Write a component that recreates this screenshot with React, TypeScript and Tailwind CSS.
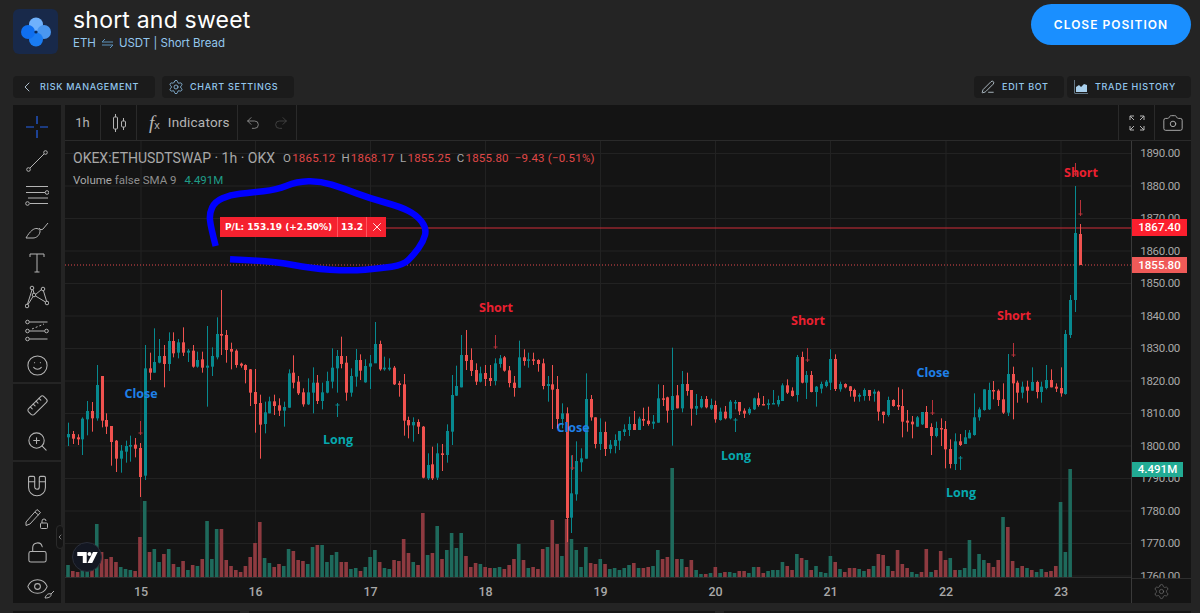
import { ChevronLeft, Settings, PenLine, Undo2, Redo2, Camera, Ruler, ZoomIn, Magnet, LockOpen, Eye, Smile, X } from "lucide-react"

// volume bars, page coords: 68 + i * 4.795, baseline at y = 578
const VOLUME = `g12 r6 r5 g7 g7 r7 g53 r25 r18 r20 r15 g10 g8 g7 r6 r40 g76 r25 g28 g15 r23 g28 r13 g10 r16 g7 r12 g11 r18 g56 g18 g48 r48 r17 r11 r7 r5 r11 r20 r34 r55 g19 g14 r10 r13 g11 g28 r26 r17 r16 g13 g30 r32 g32 g15 g22 g25 r15 r15 g8 g9 r6 g10 g20 g27 r15 g9 g8 r17 r16 r38 r24 g15 r12 r64 g22 r24 g51 r18 g27 g44 g29 g44 r21 r10 r14
g13 r10 r9 g9 g10 r8 r12 r18 g33 r17 g9 r10 r8 r28 g30 r57 r33 g21 r58 g38 g27 g10 g30 r14 r13 g18 r13 g8 g9 g7 g9 g12 r14 g9 r9 r10 g11 g27 r18 r20 g109 r18 g18 r10 r17 g7 g3 r3 g4 r10 g4 r5 g5 g4 r6 r6 g4 g10 r10 r4 g6 g7 g7 g15 r11 r7 g23 r19 g17 r7 g11 g5 g4 g21 r15 g8 r5 r9 r9 g8 g6 r8 g11 r23 r22 g11 r6
r27 r13 r9 g5 g3 r5 r28 g5 r7 r26 r17 g19 r7 g7 g9 g37 g8 g23 g17 r14 r10 r17 g60 r50 r16 g9 r11 g9 r7 g5 g8 r5 r6 r11 g75 g25 g108`
  .trim()
  .split(/\s+/)
  .map(s => ({ up: s[0] === "g", h: Number(s.slice(1)) }))

// candles: colour, wick top, body top, body bottom, wick bottom (read off 3x crops, y = 300 + v / 3)
const CANDLES_A = `g 368 402 412 438|r 393 402 416 432|r 403 412 418 435|g 352 356 418 465|g 303 333 358 406|r 306 333 355 395|g 195 255 355 362|r 228 228 362 382|r 340 360 380 402|r 378 378 426 497|r 420 422 476 516|g 435 452 476 518|g 422 438 455 488|g 407 435 440 485|r 414 434 446 472|r 429 444 531 591|g 135 205 527 540|r 158 205 218 240|g 85 186 218 218|g 117 168 188 190|r 135 168 192 262|g 97 123 192 213|r 97 123 160 172|g 117 127 158 175|r 82 127 158 168|g 147 152 158 186|r 135 152 200 203|g 155 180 200 203|r 155 178 203 218|g 78 197 203 320|g 142 168 200 228|g 52 102 172 178|r -30 102 107 165|r 90 105 150 188|r 128 147 155 208|r 148 152 195 203|r 188 191 197 203|r 193 195 210 250|r 207 208 278 318|r 207 276 312 398|r 284 309 374 476|g 305 337 372 400|g 290 304 340 340|r 284 304 318 345|r 295 316 332 348|g 305 321 332 380|g 208 220 323 323|r 166 218 248 265|r 228 245 280 285|r 265 277 313 320|g 235 277 313 315|g 202 248 278 340|r 225 248 303 312|g 248 277 303 328|g 215 243 278 280|g 145 203 245 265|g 150 168 205 278|r 110 168 192 205|r 168 188 278 302|g 205 228 278 290|g 147 180 230 260|r 163 180 212 240|g 178 198 247 248|g 165 190 200 267|g 66 132 190 188|r 122 132 208 212|g 170 203 208 212|g 175 203 208 212|r 198 203 253 255|r 243 250 255 290|r 222 253 362 407|r 350 360 376 415|g 352 366 376 425|r 358 366 380 402|r 378 380 533 535|g 460 495 535 540|r 440 493 535 540|g 430 460 533 540|r 432 460 465 513|g 373 393 465 488|g 225 285 395 435|g 197 258 287 288|g 105 165 262 262|r 90 165 183 210|r 145 180 213 228|r 190 210 245 255|g 200 220 245 247|r 195 219 237 258|r 195 234 243 258|g 175 190 243 256|g 165 175 192 203|r 168 172 212 215|r 198 211 249 262|r 228 248 264 290|g 122 172 263 264|r 148 172 183 197|g 158 178 182 203|r 158 178 182 195|r 178 180 192 215|r 176 190 258 268|g 228 252 258 305|r 195 253 269 387|r 228 267 357 385|g 310 340 357 385|r 322 340 654 726|g 466 580 653 699|g 424 483 583 602|g 445 475 487 515|g 220 297 476 476|r 285 297 352 362|r 352 352 432 445|g 355 396 432 450|r 365 396 447 468|g 420 434 447 460|g 403 420 438 460|g 393 393 422 450|g 373 388 396 408|g 350 372 390 408|r 333 372 390 390|g 350 356 390 390|r 323 357 362 378|r 320 362 372 377|g 345 365 371 387|g 253 295 368 368|r 255 295 299 318|r 290 292 332 368|g 143 288 330 437|r 255 286 325 325|g 213 252 325 337|r 218 252 273 287|r 270 270 326 377|g 282 318 326 345|g 288 297 322 325|r 288 297 322 325|g 296 315 326 330|r 302 315 358 368|g 323 335 360 362|r 318 335 355 358|g 300 305 355 358|g 300 306 308 328|r 306 306 334 345|r 325 332 341 354|g 322 327 340 345|g 293 295 328 330|r 278 295 315 320|r 288 312 315 316|g 298 310 315 328|g 270 309 311 312|g 287 300 313 320|g 250 256 303 303|r 238 256 278 282|r 262 272 288 290|g 165 171 285 305|r 155 171 248 250|g 213 225 248 297|r 213 225 276 277|g 258 260 276 320|g 245 252 266 280|g 240 245 258 262|g 148 177 248 270|r 163 177 267 273|g 245 252 268 275|r 250 252 262 265|r 258 259 273 290|r 266 270 290 305|g 280 285 290 305|g 265 270 288 302|r 270 270 288 302|g 268 275 281 305|r 272 275 335 362|r 335 335 345 370|g 290 300 345 350|r 298 300 318 320|r 262 315 320 330`

const CANDLES_B = `r 178 228 275 322|r 240 272 278 305|r 258 275 283 325|g 258 262 290 290|g 246 246 283 285|r 228 246 294 293|r 280 291 318 375|g 275 294 318 322|r 265 294 298 348|r 273 297 358 415|r 328 357 402 415|g 310 334 402 420|r 312 334 345 348|g 300 322 342 342|g 300 308 325 325|g 190 262 315 317|g 232 238 262 272|g 178 178 240 242|g 158 180 238 240|r 153 180 184 208|r 178 182 210 228|r 160 208 248 252|g 72 132 248 258|r 110 132 160 268|r 152 158 188 218|g 155 170 188 205|r 152 170 182 218|g 112 156 182 182|r 152 156 186 205|g 155 170 186 218|g 105 150 174 178|r 118 150 172 172|r 160 170 176 186|r 112 174 190 200|g 0 12 192 194|g -105 -90 15 24|g -432 -291 -90 -54|r -318 -288 -195 -195`

const parseCandles = (src: string, yBase: number, start: number) =>
  src.split("|").map((row, i) => {
    const [c, a, b, d, e] = row.split(" ")
    const y = (v: string) => yBase + Number(v) / 3
    return { up: c === "g", x: Math.round(68 + (i + start) * 4.795), wt: y(a), bt: y(b), bb: y(d), wb: y(e) }
  })

const CANDLES = [...parseCandles(CANDLES_A, 300, 0), ...parseCandles(CANDLES_B, 330, 174)]

// x, y from, y to, pointing down?
const ARROWS: [number, number, number, boolean][] = [
  [140, 421, 435, true], [495, 335, 349, true], [572, 455, 470, true], [807, 348, 362, true],
  [932, 400, 415, true], [1013, 343, 357, true], [1080, 200, 216, true], [1075, 163, 176, true],
  [337, 403, 417, false], [735, 418, 432, false], [960, 456, 470, false],
]

const MARKS: [string, number, number, string][] = [
  ["Short", 1081, 173, "#ea2030"], ["Short", 496, 308, "#ea2030"], ["Short", 808, 321, "#ea2030"], ["Short", 1014, 316, "#ea2030"],
  ["Close", 141, 394, "#1f80e8"], ["Close", 573, 428, "#1f80e8"], ["Close", 933, 373, "#1f80e8"],
  ["Long", 338, 440, "#06a8ae"], ["Long", 736, 456, "#06a8ae"], ["Long", 961, 493, "#06a8ae"],
]

const DAYS: [string, number][] = [["15", 140.5], ["16", 255], ["17", 370], ["18", 485], ["19", 600], ["20", 715], ["21", 830], ["22", 945.5], ["23", 1060.5]]
const PRICES = [1890, 1880, 1870, 1860, 1850, 1840, 1830, 1820, 1810, 1800, 1790, 1780, 1770, 1760]
const priceY = (i: number) => 153 + i * 32.5

// hand drawn circle around the P/L badge
const SCRIBBLE = [[47, 228], [32, 170], [28, 130], [45, 95], [90, 75], [150, 68], [230, 60], [290, 35], [360, 33], [430, 55], [510, 85], [600, 110], [650, 135], [680, 175], [670, 215], [640, 255], [610, 285], [540, 295], [450, 303], [330, 295], [230, 275], [90, 268]]
  .map(([x, y]) => [200 + x / 3, 170 + y / 3])

const scribblePath = SCRIBBLE.reduce((d, p, i, all) => {
  if (i === 0) return `M${p[0]} ${p[1]}`
  if (i === all.length - 1) return `${d} L${p[0]} ${p[1]}`
  const n = all[i + 1]
  return `${d} Q${p[0]} ${p[1]} ${(p[0] + n[0]) / 2} ${(p[1] + n[1]) / 2}`
}, "")

function ToolIcon({ children }: { children: React.ReactNode }) {
  return (
    <div className="h-[34px] flex items-center justify-center text-[#b4b4b4]">
      <svg width="24" height="24" viewBox="0 0 24 24" fill="none" stroke="currentColor" strokeWidth="1">
        {children}
      </svg>
    </div>
  )
}

function LeftToolbar() {
  const lucide = "w-[23px] h-[23px] text-[#b4b4b4]"
  const cell = "h-[34px] flex items-center justify-center"
  return (
    <div className="w-12 flex flex-col gap-[2px] shrink-0">
      <div className="bg-[#141414] h-[280px] pt-[5px]">
        <ToolIcon>
          <path d="M12 1v8M12 15v8M1 12h8M15 12h8" stroke="#2563eb" strokeWidth="1.2" />
        </ToolIcon>
        <ToolIcon>
          <circle cx="3.5" cy="20.5" r="1.8" /><circle cx="20.5" cy="3.5" r="1.8" /><path d="M5 19 19 5" />
        </ToolIcon>
        <ToolIcon>
          <path d="M1 3.5h22M1 9.5h19M3 15h20M5 20.5h18" strokeWidth="1.2" /><circle cx="22" cy="9.5" r="1.8" /><circle cx="2.5" cy="20.5" r="1.8" />
        </ToolIcon>
        <ToolIcon>
          <path d="M1 21h7c3 0 6-2 7-6 .5-2-1-3-3-3.500C9 11 5 14 1 21Zm13-10c1 2 3 2 4 1l5-6" />
        </ToolIcon>
        <ToolIcon>
          <path d="M5 6V3h14v3M12 3v18M9.500 21h5" />
        </ToolIcon>
        <ToolIcon>
          <circle cx="7" cy="3" r="1.8" /><circle cx="18" cy="4" r="1.8" /><circle cx="2" cy="21" r="1.8" /><circle cx="22" cy="18" r="1.8" /><circle cx="9" cy="10" r="1.8" />
          <path d="M7 5 2.500 19M8 4.500l1 4M10.500 11l10 6M3 19.500 8 11.500M10.500 9.500l6-5M18.500 6l3 10" />
        </ToolIcon>
        <ToolIcon>
          <circle cx="2.500" cy="3" r="1.8" /><circle cx="2.500" cy="12" r="1.8" /><circle cx="21.500" cy="12" r="1.8" /><circle cx="2.500" cy="20" r="1.8" />
          <path d="M4.500 3h18M4.500 12h15M4.500 20h18" /><path d="M7 10l12-5" strokeDasharray="2 2" />
        </ToolIcon>
        <div className={cell}><Smile className={lucide} strokeWidth={1.1} /></div>
      </div>
      <div className="bg-[#141414] h-[77px] pt-1">
        <div className={cell}><Ruler className={`${lucide} -scale-x-100`} strokeWidth={1.1} /></div>
        <div className={cell}><ZoomIn className={`${lucide} translate-y-[2px]`} strokeWidth={1.1} /></div>
      </div>
      <div className="bg-[#141414] flex-1 pt-[5px]">
        <div className={cell}><Magnet className="w-[26px] h-[26px] text-[#b4b4b4] rotate-[135deg]" strokeWidth={1} /></div>
        <ToolIcon>
          <path d="M1 16 12 3.500l3.500 3L5 18l-4 1.500ZM10 6l3.500 3" />
          <rect x="15.500" y="17" width="7" height="5.500" rx="1" /><path d="M17 17v-2a2 2 0 0 1 4 0" />
        </ToolIcon>
        <div className={cell}><LockOpen className={lucide} strokeWidth={1.1} /></div>
        <div className={`${cell} relative`}>
          <Eye className={lucide} strokeWidth={1.1} />
          <svg className="absolute left-[31px] top-[21px]" width="11" height="9" viewBox="0 0 11 9" fill="none" stroke="#b4b4b4">
            <path d="M1 8c1-3 3-5 6-4 .5 2-1 4-6 4Zm6-4 3-3" />
          </svg>
        </div>
      </div>
    </div>
  )
}

function TopToolbar() {
  return (
    <div className="h-9 shrink-0 flex bg-[#141414] border-b border-[#2a2a2a] text-[#b4b4b4]">
      <div className="w-[36px] border-r border-[#2a2a2a] flex items-center justify-center font-['Roboto',sans-serif] text-[13px]">1h</div>
      <div className="w-[36px] border-r border-[#2a2a2a] flex items-center justify-center">
        <svg width="16" height="18" viewBox="0 0 16 18" fill="none" stroke="currentColor">
          <path d="M4.500 0v3M4.500 15v3M12.500 4v3M12.500 13v3" /><rect x="2.500" y="3" width="4" height="12" rx="1" /><rect x="10.500" y="7" width="4" height="6" rx="1" />
        </svg>
      </div>
      <div className="w-[101px] border-r border-[#2a2a2a] flex items-center pl-[12px] gap-[8px]">
        <span className="font-['Liberation_Serif',serif] italic text-[19px] leading-none">f<span className="text-[11px] not-italic font-['Liberation_Sans',sans-serif]">x</span></span>
        <span className="font-['Roboto',sans-serif] text-[13.500px] tracking-[0.2px]">Indicators</span>
      </div>
      <div className="w-[59px] border-r border-[#2a2a2a] flex items-center justify-center gap-[12px]">
        <Undo2 className="w-[16px] h-[16px] text-[#9a9a9a]" strokeWidth={1.2} />
        <Redo2 className="w-[16px] h-[16px] text-[#4a4a4a]" strokeWidth={1.2} />
      </div>
      <div className="flex-1" />
      <div className="w-[36px] border-l border-[#2a2a2a] flex items-center justify-center">
        <svg width="16" height="16" viewBox="0 0 16 16" fill="none" stroke="currentColor">
          <path d="M1 5V1h4M1 1l4 4M15 5V1h-4M15 1l-4 4M1 11v4h4M1 15l4-4M15 11v4h-4M15 15l-4-4" />
        </svg>
      </div>
      <div className="w-[37px] border-l border-[#2a2a2a] flex items-center justify-center">
        <Camera className="w-[22px] h-[22px]" strokeWidth={1} />
      </div>
    </div>
  )
}

function Chart() {
  return (
    <svg className="block w-[1066px] h-[437px]" viewBox="65 141 1066 437">
      {PRICES.map((_, i) => (
        <rect key={i} x="65" y={priceY(i)} width="1066" height="1" fill="#222222" />
      ))}
      {DAYS.map(([d, x]) => (
        <rect key={d} x={x} y="141" width="1" height="437" fill="#222222" />
      ))}
      <rect x="65" y="577" width="1066" height="1" fill="#2e2e2e" />

      {VOLUME.map((v, i) => (
        <rect key={i} x={68 + i * 4.795 - 1.8} y={577 - v.h} width="3.6" height={v.h} fill={v.up ? "#1e6a5c" : "#8e3a40"} />
      ))}

      <rect x="386" y="227.500" width="745" height="1" fill="#d02c38" />
      <path d="M65 265H1131" stroke="#e0484c" strokeDasharray="1 2" />

      {CANDLES.map((c, i) => {
        const fill = c.up ? "#07898f" : "#f0524f"
        return (
          <g key={i} fill={fill}>
            <rect x={c.x} y={c.wt} width="1" height={Math.max(c.wb - c.wt, 1)} />
            <rect x={c.x - 1} y={c.bt} width="3" height={Math.max(c.bb - c.bt, 1.500)} />
          </g>
        )
      })}

      {ARROWS.map(([x, a, b, down], i) => (
        <path key={i} d={down ? `M${x + 0.5} ${a}V${b}M${x - 1.500} ${b - 2}H${x + 2.500}` : `M${x + 0.5} ${b}V${a}M${x - 1.500} ${a + 2}H${x + 2.500}`} stroke={down ? "#b8323a" : "#07898f"} fill="none" />
      ))}

      {MARKS.map(([t, x, y, color], i) => (
        <text key={i} x={x} y={y + 4} textAnchor="middle" fill={color} fontSize="12.500" fontWeight="700" fontFamily="'Open Sans', sans-serif">{t}</text>
      ))}

      <path d={scribblePath} fill="none" stroke="#0000ff" strokeWidth="6.500" strokeLinecap="butt" strokeLinejoin="round" />
    </svg>
  )
}

function PriceAxis() {
  return (
    <div className="relative h-[437px]">
      <svg className="block w-[59px] h-[437px]" viewBox="1132 141 59 437">
        {PRICES.map((p, i) => (
          <text key={p} x="1180" y={priceY(i) + 4} textAnchor="end" fill="#a8a8a8" fontSize="11.500" fontFamily="'Roboto', sans-serif" letterSpacing="-0.3">{p}.00</text>
        ))}
      </svg>
      <span className="absolute left-0 top-[78px] w-[55px] h-[17px] bg-[#fb1f2e] text-white text-[11.500px] font-medium leading-[17px] text-center font-['Roboto',sans-serif]">1867.40</span>
      <span className="absolute left-0 top-[116px] w-[55px] h-[16px] bg-[#ef5a58] text-white text-[11.500px] font-medium leading-[16px] text-center font-['Roboto',sans-serif]">1855.80</span>
      <span className="absolute left-0 top-[321px] w-[51px] h-[15px] bg-[#22ab94] text-white text-[11.500px] font-medium leading-[15px] text-center font-['Roboto',sans-serif]">4.491M</span>
    </div>
  )
}

export default function App() {
  return (
    <div className="h-[613px] w-[1200px] overflow-hidden bg-[#242424] pl-[13px] pr-[9px]">
      {/* Header */}
      <div className="h-[76px] flex justify-between items-start">
        <div className="flex gap-[15px] mt-[9px]">
          <div className="w-[45px] h-[45px] rounded-md bg-[#18294a] flex items-center justify-center">
            <svg width="32" height="32" viewBox="0 0 32 32">
              <circle cx="16" cy="8.500" r="7" fill="#6fb1fc" />
              <circle cx="24" cy="16" r="7" fill="#4a97f0" />
              <circle cx="16" cy="23.500" r="7" fill="#1a7cf2" />
              <circle cx="8" cy="16" r="7" fill="#0f6ff0" />
              <circle cx="16" cy="16" r="1.600" fill="#0a2a5a" />
            </svg>
          </div>
          <div className="-mt-[4px]">
            <div className="text-[23px] leading-[30px] text-white font-['Inter',sans-serif] tracking-[0.2px]">short and sweet</div>
            <div className="flex items-center gap-[5px] text-[11.500px] leading-[16px] text-[#93c7ee] font-['Inter',sans-serif]">
              ETH
              <svg width="13" height="11" viewBox="0 0 13 11" fill="none" stroke="#5d93bd"><path d="M4 1 1 4h11M9 10l3-3H1" /></svg>
              USDT | Short Bread
            </div>
          </div>
        </div>
        <button className="mt-1 w-40 h-[41px] rounded-full bg-[#1a8fff] text-white text-[12px] font-semibold tracking-[1px] font-['Inter',sans-serif]">CLOSE POSITION</button>
      </div>

      {/* Action buttons */}
      <div className="h-[22px] flex gap-[3px] font-['Inter',sans-serif] text-[9px] font-medium tracking-[0.7px] text-[#93c7ee]">
        <div className="w-[142px] bg-[#1b1b1b] rounded flex items-center pl-[6px] gap-[5px]">
          <ChevronLeft className="w-[16px] h-[16px] text-[#c4d8e8]" strokeWidth={1.300} />RISK MANAGEMENT
        </div>
        <div className="w-[132px] ml-1 bg-[#1b1b1b] rounded flex items-center pl-[6px] gap-[6px]">
          <Settings className="w-[16px] h-[16px] text-[#93c7ee]" strokeWidth={1.200} />CHART SETTINGS
        </div>
        <div className="flex-1" />
        <div className="w-[90px] bg-[#1b1b1b] rounded flex items-center pl-[7px] gap-[7px]">
          <PenLine className="w-[14px] h-[14px] text-[#d4e4ef]" strokeWidth={1.300} />EDIT BOT
        </div>
        <div className="w-[124px] bg-[#1b1b1b] rounded flex items-center pl-[7px] gap-[7px]">
          <svg width="14" height="14" viewBox="0 0 14 14" fill="#a9d0ec">
            <path d="M.500 0v13.500H14V13H1V0Z" /><path d="M2 12V7l3-2 2 2 3-3 3 1v7Z" />
          </svg>
          TRADE HISTORY
        </div>
      </div>

      {/* Chart panel */}
      <div className="mt-[7px] h-[498px] flex gap-1">
        <LeftToolbar />
        <div className="flex-1 min-w-0 flex flex-col bg-[#141414]">
          <TopToolbar />
          <div className="flex-1 flex min-h-0">
            <div className="w-[1066px] shrink-0 flex flex-col">
              <div className="relative h-[437px]">
                <Chart />
                <div className="absolute left-2 top-[9px] font-['Roboto',sans-serif]">
                  <div className="flex items-center text-[14px] leading-4 text-[#a8a8a8] whitespace-nowrap">
                    <span className="w-[210px]">OKEX:ETHUSDTSWAP · 1h · OKX</span>
                    <span className="flex gap-[6px] text-[11.500px] tracking-[0.2px] text-[#a8a8a8]">
                      <span>O <span className="-ml-[2px] text-[#e04848]">1865.12</span></span>
                      <span>H <span className="-ml-[2px] text-[#e04848]">1868.17</span></span>
                      <span>L <span className="-ml-[2px] text-[#e04848]">1855.25</span></span>
                      <span>C <span className="-ml-[2px] text-[#e04848]">1855.80</span></span>
                      <span className="text-[#e04848]">−9.43 (−0.51%)</span>
                    </span>
                  </div>
                  <div className="mt-[6px] text-[11.500px] leading-4 text-[#8e8e8e] whitespace-nowrap">
                    <span className="text-[#a8a8a8]">Volume</span> false SMA 9 <span className="ml-[5px] text-[#1f9c87]">4.491M</span>
                  </div>
                </div>
                <div className="absolute left-[155px] top-[76px] w-[166px] h-5 flex bg-[#f5212f] text-white text-[9px] font-bold leading-5 font-['DejaVu_Sans',sans-serif]">
                  <span className="w-[118px] pl-[5px] whitespace-nowrap border-r border-[#ff5560]">P/L: 153.19 (+2.50%)</span>
                  <span className="w-[29px] text-center border-r border-[#ff5560]">13.2</span>
                  <span className="flex-1 flex items-center justify-center"><X className="w-[14px] h-[14px]" strokeWidth={1.500} /></span>
                </div>
                <div className="absolute left-[7px] top-[401px] w-[30px] h-[30px] rounded-full bg-[#131722] border border-[#2a2e39] flex items-center justify-center">
                  <svg width="21" height="11" viewBox="0 0 26 14" fill="#ffffff">
                    <path d="M0 0h12v14H7V5H0Z" /><circle cx="15.500" cy="2.500" r="2.500" /><path d="M20 0h6l-7 14h-6Z" />
                  </svg>
                </div>
                <div className="absolute -left-[9px] top-[384px] w-[8px] h-[24px] rounded bg-[#141414] border border-[#2a2a2a] flex items-center justify-center">
                  <ChevronLeft className="w-[8px] h-[8px] shrink-0 text-[#aaaaaa]" strokeWidth={2} />
                </div>
              </div>
              <svg className="block w-[1066px] h-[25px]" viewBox="65 578 1066 25">
                {DAYS.map(([d, x]) => (
                  <text key={d} x={x + 0.5} y="595.500" textAnchor="middle" fill="#a8a8a8" fontSize="12.500" fontWeight="500" fontFamily="'Roboto', sans-serif">{d}</text>
                ))}
              </svg>
            </div>
            <div className="flex-1 flex flex-col border-l border-[#3a3a3a]">
              <PriceAxis />
              <div className="flex-1 flex items-center justify-center pr-[1px] border-t border-[#2e2e2e]">
                <Settings className="w-[17px] h-[17px] text-[#6e6e6e]" strokeWidth={1} />
              </div>
            </div>
          </div>
        </div>
      </div>

      {/* Tabs peeking in at the bottom */}
      <div className="mt-[8px] h-[2px] flex gap-[9px]">
        <div className="w-[227px] bg-[#161616]" />
        <div className="w-[466px] bg-[#161616]" />
        <div className="flex-1 bg-[#161616]" />
      </div>
    </div>
  )
}
